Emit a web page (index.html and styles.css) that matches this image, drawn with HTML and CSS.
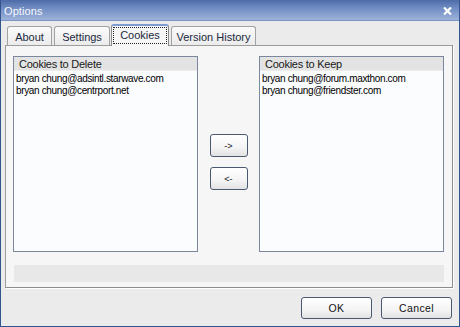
FILE: index.html
```html
<!DOCTYPE html>
<html>
<head>
<meta charset="utf-8">
<link rel="stylesheet" href="styles.css">
</head>
<body>
<div class="window">
  <div class="titlebar">
    <span class="title">Options</span>
    <svg class="close" width="9" height="8" viewBox="0 0 9 8"><path d="M1 0.5 L8 7.5 M8 0.5 L1 7.5" stroke="#ffffff" stroke-width="2.2" fill="none"/></svg>
  </div>
  <div class="body">
    <div class="tabs">
      <div class="tab tab-about">About</div>
      <div class="tab tab-settings">Settings</div>
      <div class="tab tab-active"><span class="focus">Cookies</span></div>
      <div class="tab tab-version">Version History</div>
    </div>
    <div class="panel">
      <div class="lists">
        <div class="list">
          <div class="list-head">Cookies to Delete</div>
          <div class="list-items">
            <div class="item">bryan chung@adsintl.starwave.com</div>
            <div class="item">bryan chung@centrport.net</div>
          </div>
        </div>
        <div class="movers">
          <button class="btn small">-&gt;</button>
          <button class="btn small">&lt;-</button>
        </div>
        <div class="list">
          <div class="list-head">Cookies to Keep</div>
          <div class="list-items">
            <div class="item">bryan chung@forum.maxthon.com</div>
            <div class="item">bryan chung@friendster.com</div>
          </div>
        </div>
      </div>
      <div class="strip"></div>
    </div>
    <div class="actions">
      <button class="btn action">OK</button>
      <button class="btn action">Cancel</button>
    </div>
  </div>
</div>
</body>
</html>
```
FILE: styles.css
```css
* { box-sizing: border-box; }
html, body { margin: 0; padding: 0; background: #ebebeb; }
body { font-family: "Liberation Sans", Arial, sans-serif; }

.window {
  width: 460px;
  height: 327px;
  border: 1px solid #34548f;
  border-top: none;
  background: #ebebeb;
  display: flex;
  flex-direction: column;
}

.titlebar {
  height: 21px;
  flex: none;
  display: flex;
  align-items: center;
  justify-content: space-between;
  padding: 0 7px 0 3px;
  background: linear-gradient(#4d6ba8 0%, #6d89c0 35%, #9cb2da 100%);
  border-bottom: 1px solid #7d95c4;
}
.title {
  color: #f4f7fc;
  font-size: 11px;
  letter-spacing: 0.1px;
  margin-top: 2px;
}
.close { display: block; margin-top: 1px; }

.body {
  flex: 1;
  padding: 3px 6px 0 4px;
  display: flex;
  flex-direction: column;
}

.tabs {
  display: flex;
  align-items: flex-end;
  height: 22px;
  margin-left: 2px;
  margin-bottom: -1px;
  position: relative;
  z-index: 1;
}
.tab {
  height: 19px;
  margin-bottom: 1px;
  margin-right: 2px;
  border: 1px solid #a2a2a2;
  border-bottom: none;
  border-radius: 3px 3px 0 0;
  background: linear-gradient(#fbfbfb, #ebebeb);
  color: #1b2a40;
  font-size: 11px;
  display: flex;
  align-items: center;
  justify-content: center;
  padding-top: 2px;
}
.tab-about { width: 45px; }
.tab-settings { width: 56px; margin-right: 1px; }
.tab-version { width: 85px; }
.tab-active {
  width: 58px;
  height: 22px;
  margin-bottom: 0;
  background: #f6f6f6;
  border-color: #8a8a8a;
  border-top: 2px solid #7e9cd0;
  padding-top: 0;
  padding-bottom: 2px;
}
.focus {
  border: 1px dotted #222;
  width: 54px;
  height: 17px;
  display: flex;
  align-items: center;
  justify-content: center;
  padding-bottom: 1px;
}

.panel {
  width: 448px;
  height: 243px;
  border: 1px solid #9c9c9c;
  border-right-color: #8c8c8c;
  border-bottom-color: #8c8c8c;
  background: #f6f6f6;
  padding: 10px 8px 5px 7px;
  display: flex;
  flex-direction: column;
  box-shadow: 1px 1px 0 #ffffff;
}

.lists {
  display: flex;
  height: 196px;
}
.list {
  width: 185px;
  height: 196px;
  border: 1px solid #7b879d;
  background: #fbfcfe;
  display: flex;
  flex-direction: column;
}
.list-head {
  height: 14px;
  background: #e3e3e3;
  border-bottom: 1px solid #ececec;
  font-size: 11px;
  letter-spacing: -0.25px;
  color: #1a1a1a;
  padding-left: 5px;
  line-height: 14px;
}
.list-items {
  padding: 2px 0 0 2px;
}
.item {
  height: 12px;
  line-height: 12px;
  font-size: 10px;
  letter-spacing: -0.35px;
  color: #000;
  white-space: nowrap;
}

.movers {
  width: 61px;
  display: flex;
  flex-direction: column;
  align-items: center;
  padding-top: 78px;
  gap: 10px;
}

.btn {
  border: 1px solid #4a5870;
  border-radius: 3px;
  background: linear-gradient(#ffffff 0%, #f4f4f4 60%, #e2e2e2 100%);
  font-family: "Liberation Sans", Arial, sans-serif;
  color: #111;
  padding: 0;
  margin: 0;
}
.small {
  width: 38px;
  height: 23px;
  font-size: 9px;
}
.strip {
  margin-top: 13px;
  height: 17px;
  margin-left: 1px;
  background: #e8e8e8;
}

.actions {
  display: flex;
  justify-content: flex-end;
  gap: 9px;
  margin-top: 9px;
  margin-right: 1px;
}
.action {
  width: 71px;
  height: 22px;
  font-size: 10.5px;
  letter-spacing: 0.4px;
}
```
